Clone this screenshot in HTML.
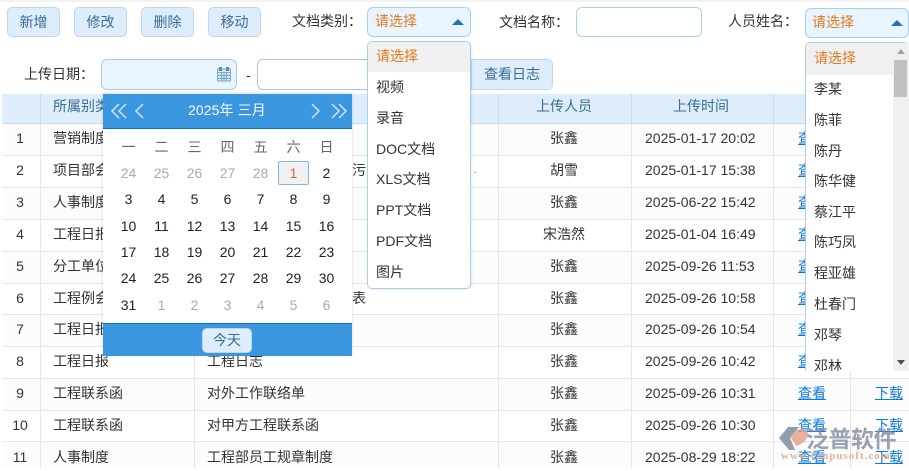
<!DOCTYPE html>
<html><head><meta charset="utf-8">
<style>
*{box-sizing:border-box}
html,body{margin:0;padding:0;width:909px;height:471px;overflow:hidden;background:#fff}
body{position:relative;font:14px/20px "Liberation Sans","Noto Sans CJK SC",sans-serif;color:#333}
.a{position:absolute;white-space:nowrap}
.btn{position:absolute;top:7px;height:30px;width:53px;background:#deedfb;border:1px solid #bcd8ef;border-radius:5px;color:#3a6c94;text-align:center;line-height:28px}
.lbl{position:absolute;color:#333;white-space:nowrap}
.inp{position:absolute;border:1px solid #a9cfee;border-radius:6px;background:#fff}
.tri{position:absolute;width:0;height:0;border-left:6px solid transparent;border-right:6px solid transparent;border-bottom:6px solid #1f74b8}
.hr{position:absolute;left:2px;width:907px;height:1px;background:#e6e6e6}
.vr{position:absolute;width:1px;background:#e6e6e6}
.row{position:absolute;left:2px;width:907px;height:32px}
.c{position:absolute;white-space:nowrap;line-height:20px}
.ct{text-align:center;transform:translateX(-50%)}
.lnk{color:#0a7ae6;text-decoration:underline}
.dd{position:absolute;background:#fff;border:1px solid #a9cfee;overflow:hidden}
.dd div{position:absolute;left:8px;white-space:nowrap}
.cal{position:absolute;left:103px;top:94px;width:249px;height:262px;background:#fff;box-shadow:0 -1px 3px rgba(0,0,0,.15)}
.d{position:absolute;width:33px;text-align:center;line-height:20px;color:#222}
.g{color:#aaa}
.w{color:#666}
</style></head><body>
<div class="a" style="left:0;top:0;width:909px;height:2px;background:#f3f3f3"></div>

<div class="btn" style="left:7px">新增</div>
<div class="btn" style="left:74px">修改</div>
<div class="btn" style="left:141px">删除</div>
<div class="btn" style="left:208px">移动</div>

<div class="lbl" style="left:292px;top:11px">文档类别：</div>
<div class="inp" style="left:367px;top:7px;width:104px;height:30px;background:#e8f4fe"></div>
<div class="a" style="left:375px;top:11px;color:#e27a1e">请选择</div>
<div class="tri" style="left:452px;top:19px"></div>

<div class="lbl" style="left:499px;top:12px">文档名称：</div>
<div class="inp" style="left:576px;top:7px;width:126px;height:30px"></div>

<div class="lbl" style="left:728px;top:11px">人员姓名：</div>
<div class="inp" style="left:805px;top:8px;width:104px;height:30px;background:#e8f4fe"></div>
<div class="a" style="left:812px;top:12px;color:#e27a1e">请选择</div>
<div class="tri" style="left:891px;top:20px"></div>

<div class="lbl" style="left:24px;top:64px">上传日期：</div>
<div class="inp" style="left:101px;top:59px;width:136px;height:31px;background:#e8f4fe"></div>
<svg class="a" style="left:217px;top:66px" width="14" height="16" viewBox="0 0 14 16"><rect x="0.5" y="3" width="13" height="12" fill="#d3e8f8" stroke="#7ba8cc"/><path d="M0 6.500h14M1 9.500h12M1 12.500h12M4.500 6v9M7 6v9M9.500 6v9" stroke="#7ba8cc" stroke-width="1" fill="none"/><rect x="2" y="1" width="3" height="4" fill="#5a8bb3"/><rect x="9" y="1" width="3" height="4" fill="#5a8bb3"/></svg>
<div class="a" style="left:246px;top:65px">-</div>
<div class="inp" style="left:257px;top:59px;width:130px;height:31px;border-color:#a8c4da"></div>
<div class="btn" style="left:471px;top:59px;width:82px;height:31px;line-height:29px;border-radius:0 5px 5px 0">查看日志</div>

<!-- table -->
<div class="a" style="left:2px;top:94px;width:907px;height:30px;background:#deedfb;border-bottom:1px solid #c7dcee"></div>
<div class="a" style="left:40px;top:94px;width:1px;height:30px;background:#c7dcee"></div>
<div class="a" style="left:498px;top:94px;width:1px;height:30px;background:#c7dcee"></div>
<div class="a" style="left:631px;top:94px;width:1px;height:30px;background:#c7dcee"></div>
<div class="a" style="left:773px;top:94px;width:1px;height:30px;background:#c7dcee"></div>
<div class="a" style="left:53px;top:96px;color:#3a6c94">所属别类</div>
<div class="a" style="left:536px;top:96px;color:#3a6c94">上传人员</div>
<div class="a" style="left:673px;top:96px;color:#3a6c94">上传时间</div>

<div class="row" style="top:124px;background:#fcfcfc"></div>
<div class="row" style="top:188px;background:#fcfcfc"></div>
<div class="row" style="top:251px;background:#fcfcfc"></div>
<div class="row" style="top:315px;background:#fcfcfc"></div>
<div class="row" style="top:379px;background:#fcfcfc"></div>
<div class="row" style="top:442px;height:26px;background:#fcfcfc"></div>

<div class="hr" style="top:155px"></div><div class="hr" style="top:187px"></div><div class="hr" style="top:219px"></div><div class="hr" style="top:251px"></div><div class="hr" style="top:283px"></div><div class="hr" style="top:314px"></div><div class="hr" style="top:346px"></div><div class="hr" style="top:378px"></div><div class="hr" style="top:410px"></div><div class="hr" style="top:441px"></div>
<div class="vr" style="left:40px;top:124px;height:344px"></div>
<div class="vr" style="left:194px;top:124px;height:344px"></div>
<div class="vr" style="left:498px;top:124px;height:344px"></div>
<div class="vr" style="left:631px;top:124px;height:344px"></div>
<div class="vr" style="left:773px;top:124px;height:344px"></div>
<div class="vr" style="left:850px;top:124px;height:344px"></div>
<div class="a" style="left:0;top:468px;width:909px;height:3px;background:#fff"></div>

<div class="c ct" style="left:20px;top:128px">1</div><div class="c" style="left:53px;top:128px">营销制度</div><div class="c ct" style="left:564px;top:128px">张鑫</div><div class="c" style="left:645px;top:128px">2025-01-17 20:02</div><div class="c lnk" style="left:798px;top:128px">查看</div>
<div class="c ct" style="left:20px;top:160px">2</div><div class="c" style="left:53px;top:160px">项目部会</div><div class="c" style="left:352px;top:160px">污水</div><div class="a" style="left:474px;top:172px;width:2px;height:1px;background:#d69a5a"></div><div class="c ct" style="left:564px;top:160px">胡雪</div><div class="c" style="left:645px;top:160px">2025-01-17 15:38</div><div class="c lnk" style="left:798px;top:160px">查看</div>
<div class="c ct" style="left:20px;top:192px">3</div><div class="c" style="left:53px;top:192px">人事制度</div><div class="c ct" style="left:564px;top:192px">张鑫</div><div class="c" style="left:645px;top:192px">2025-06-22 15:42</div><div class="c lnk" style="left:798px;top:192px">查看</div>
<div class="c ct" style="left:20px;top:224px">4</div><div class="c" style="left:53px;top:224px">工程日报</div><div class="c ct" style="left:564px;top:224px">宋浩然</div><div class="c" style="left:645px;top:224px">2025-01-04 16:49</div><div class="c lnk" style="left:798px;top:224px">查看</div>
<div class="c ct" style="left:20px;top:256px">5</div><div class="c" style="left:53px;top:256px">分工单位</div><div class="c ct" style="left:564px;top:256px">张鑫</div><div class="c" style="left:645px;top:256px">2025-09-26 11:53</div><div class="c lnk" style="left:798px;top:256px">查看</div>
<div class="c ct" style="left:20px;top:288px">6</div><div class="c" style="left:53px;top:288px">工程例会</div><div class="c" style="left:352px;top:288px">表</div><div class="c ct" style="left:564px;top:288px">张鑫</div><div class="c" style="left:645px;top:288px">2025-09-26 10:58</div><div class="c lnk" style="left:798px;top:288px">查看</div>
<div class="c ct" style="left:20px;top:319px">7</div><div class="c" style="left:53px;top:319px">工程日报</div><div class="c ct" style="left:564px;top:319px">张鑫</div><div class="c" style="left:645px;top:319px">2025-09-26 10:54</div><div class="c lnk" style="left:798px;top:319px">查看</div>
<div class="c ct" style="left:20px;top:351px">8</div><div class="c" style="left:53px;top:351px">工程日报</div><div class="c" style="left:207px;top:351px">工程日志</div><div class="c ct" style="left:564px;top:351px">张鑫</div><div class="c" style="left:645px;top:351px">2025-09-26 10:42</div><div class="c lnk" style="left:798px;top:351px">查看</div>
<div class="c ct" style="left:20px;top:383px">9</div><div class="c" style="left:53px;top:383px">工程联系函</div><div class="c" style="left:207px;top:383px">对外工作联络单</div><div class="c ct" style="left:564px;top:383px">张鑫</div><div class="c" style="left:645px;top:383px">2025-09-26 10:31</div><div class="c lnk" style="left:798px;top:383px">查看</div><div class="c lnk" style="left:875px;top:383px">下载</div>
<div class="c ct" style="left:20px;top:415px">10</div><div class="c" style="left:53px;top:415px">工程联系函</div><div class="c" style="left:207px;top:415px">对甲方工程联系函</div><div class="c ct" style="left:564px;top:415px">张鑫</div><div class="c" style="left:645px;top:415px">2025-09-26 10:30</div><div class="c lnk" style="left:798px;top:415px">查看</div><div class="c lnk" style="left:875px;top:415px">下载</div>
<div class="c ct" style="left:20px;top:447px">11</div><div class="c" style="left:53px;top:447px">人事制度</div><div class="c" style="left:207px;top:447px">工程部员工规章制度</div><div class="c ct" style="left:564px;top:447px">张鑫</div><div class="c" style="left:645px;top:447px">2025-08-29 18:22</div><div class="c lnk" style="left:798px;top:447px">查看</div><div class="c lnk" style="left:875px;top:447px">下载</div>

<!-- watermark -->
<svg class="a" style="left:778px;top:426px;opacity:.85" width="34" height="26" viewBox="0 0 34 26"><path d="M10 1h11L12 12l5 12h-6L1 12z" fill="#7e8ea3"/><path d="M13 12C14 6 20 2 26 3c3 1 4 3 4 5 0 6-7 11-12 12z" fill="#e2a58c"/></svg>
<div class="a" style="left:806px;top:424px;font-size:23px;line-height:30px;font-weight:bold;color:#7e8da0;letter-spacing:-.5px;opacity:.8">泛普软件</div>
<div class="a" style="left:781px;top:449px;font:bold 11px/14px 'Liberation Serif',serif;color:#e0a48c;letter-spacing:1px;opacity:.85">www.fanpusoft.com</div>

<!-- doc type dropdown -->
<div class="dd" style="left:367px;top:41px;width:104px;height:248px;border-radius:5px;box-shadow:1px 1px 2px rgba(0,0,0,.08)">
<div style="left:0;top:0;width:102px;height:30px;background:#f0f0f0"></div>
<div style="top:4px;color:#e27a1e">请选择</div>
<div style="top:35px">视频</div>
<div style="top:66px">录音</div>
<div style="top:97px">DOC文档</div>
<div style="top:127px">XLS文档</div>
<div style="top:158px">PPT文档</div>
<div style="top:189px">PDF文档</div>
<div style="top:220px">图片</div>
</div>

<!-- person dropdown -->
<div class="dd" style="left:805px;top:42px;width:104px;height:329px;border-radius:5px 5px 0 0;border-bottom:none;border-right:none">
<div style="left:0;top:0;width:87px;height:32px;background:#f0f0f0"></div>
<div style="top:5px;color:#e27a1e">请选择</div>
<div style="top:36px">李某</div>
<div style="top:67px">陈菲</div>
<div style="top:98px">陈丹</div>
<div style="top:128px">陈华健</div>
<div style="top:159px">蔡江平</div>
<div style="top:189px">陈巧凤</div>
<div style="top:220px">程亚雄</div>
<div style="top:251px">杜春门</div>
<div style="top:282px">邓琴</div>
<div style="top:313px">邓林</div>
<div style="left:87px;top:0;width:16px;height:329px;background:#f0f0f0"></div>
<div style="left:88px;top:17px;width:13px;height:37px;background:#c1c1c1"></div>
<div style="left:91px;top:6px;width:0;height:0;border-left:4px solid transparent;border-right:4px solid transparent;border-bottom:5px solid #a3a3a3"></div>
<div style="left:91px;top:317px;width:0;height:0;border-left:4px solid transparent;border-right:4px solid transparent;border-top:5px solid #505050"></div>
</div>

<!-- calendar -->
<div class="cal">
<div class="a" style="left:0;top:0;width:249px;height:35px;background:#3a96de;border-bottom:1px solid #0a72c4"></div>
<svg class="a" style="left:7px;top:8px" width="20" height="18" viewBox="0 0 20 18" fill="none" stroke="#cfe6f8" stroke-width="1.500"><path d="M9 2L2 9l7 7M16 2L9 9l7 7"/></svg>
<svg class="a" style="left:31px;top:8px" width="12" height="18" viewBox="0 0 12 18" fill="none" stroke="#cfe6f8" stroke-width="1.500"><path d="M9 2L2 9l7 7"/></svg>
<div class="a" style="left:85px;top:6px;color:#fff;letter-spacing:.1px">2025年 三月</div>
<svg class="a" style="left:206px;top:8px" width="12" height="18" viewBox="0 0 12 18" fill="none" stroke="#cfe6f8" stroke-width="1.500"><path d="M3 2l7 7-7 7"/></svg>
<svg class="a" style="left:226px;top:8px" width="20" height="18" viewBox="0 0 20 18" fill="none" stroke="#cfe6f8" stroke-width="1.500"><path d="M3 2l7 7-7 7M10 2l7 7-7 7"/></svg>

<div class="d w" style="left:9px;top:43px">一</div><div class="d w" style="left:42px;top:43px">二</div><div class="d w" style="left:75px;top:43px">三</div><div class="d w" style="left:108px;top:43px">四</div><div class="d w" style="left:141px;top:43px">五</div><div class="d w" style="left:174px;top:43px">六</div><div class="d w" style="left:207px;top:43px">日</div>

<div class="a" style="left:175px;top:67px;width:31px;height:24px;background:#f1f1f1;border:1px solid #7fb8e8;border-radius:2px"></div>
<div class="d g" style="left:9px;top:69px">24</div><div class="d g" style="left:42px;top:69px">25</div><div class="d g" style="left:75px;top:69px">26</div><div class="d g" style="left:108px;top:69px">27</div><div class="d g" style="left:141px;top:69px">28</div><div class="d" style="left:174px;top:69px;color:#e8623a">1</div><div class="d" style="left:207px;top:69px">2</div>
<div class="d" style="left:9px;top:95px">3</div><div class="d" style="left:42px;top:95px">4</div><div class="d" style="left:75px;top:95px">5</div><div class="d" style="left:108px;top:95px">6</div><div class="d" style="left:141px;top:95px">7</div><div class="d" style="left:174px;top:95px">8</div><div class="d" style="left:207px;top:95px">9</div>
<div class="d" style="left:9px;top:122px">10</div><div class="d" style="left:42px;top:122px">11</div><div class="d" style="left:75px;top:122px">12</div><div class="d" style="left:108px;top:122px">13</div><div class="d" style="left:141px;top:122px">14</div><div class="d" style="left:174px;top:122px">15</div><div class="d" style="left:207px;top:122px">16</div>
<div class="d" style="left:9px;top:148px">17</div><div class="d" style="left:42px;top:148px">18</div><div class="d" style="left:75px;top:148px">19</div><div class="d" style="left:108px;top:148px">20</div><div class="d" style="left:141px;top:148px">21</div><div class="d" style="left:174px;top:148px">22</div><div class="d" style="left:207px;top:148px">23</div>
<div class="d" style="left:9px;top:174px">24</div><div class="d" style="left:42px;top:174px">25</div><div class="d" style="left:75px;top:174px">26</div><div class="d" style="left:108px;top:174px">27</div><div class="d" style="left:141px;top:174px">28</div><div class="d" style="left:174px;top:174px">29</div><div class="d" style="left:207px;top:174px">30</div>
<div class="d" style="left:9px;top:201px">31</div><div class="d g" style="left:42px;top:201px">1</div><div class="d g" style="left:75px;top:201px">2</div><div class="d g" style="left:108px;top:201px">3</div><div class="d g" style="left:141px;top:201px">4</div><div class="d g" style="left:174px;top:201px">5</div><div class="d g" style="left:207px;top:201px">6</div>

<div class="a" style="left:0;top:229px;width:249px;height:33px;background:#3a96de;border-top:1px solid #0a72c4"></div>
<div class="a" style="left:99px;top:234px;width:50px;height:25px;background:#deedfb;border:1px solid #bcd8ef;border-radius:5px;color:#3a6c94;text-align:center;line-height:23px">今天</div>
</div>
</body></html>
